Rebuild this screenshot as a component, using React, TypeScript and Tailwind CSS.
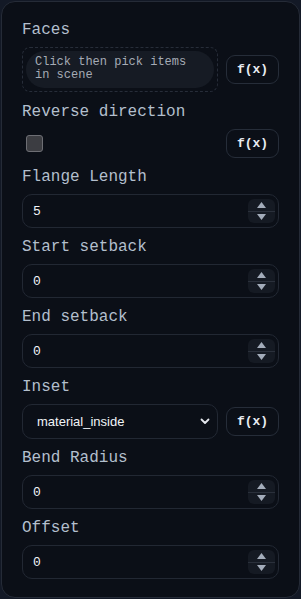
import React from 'react';

const mono = "font-['Liberation_Mono','DejaVu_Sans_Mono',monospace]";

const Label: React.FC<{ text: string }> = ({ text }) => (
  <div className={`${mono} text-[16px] leading-[20px] text-[#b3bfcd] mb-[7px]`}>{text}</div>
);

const FxButton: React.FC = () => (
  <button
    className={`${mono} shrink-0 w-[53px] h-[29px] rounded-[9px] border border-[#262d39] bg-[#0b0f17] text-[13px] font-bold text-[#e8ecf2] flex items-center justify-center`}
  >
    f(x)
  </button>
);

const Spinner: React.FC = () => (
  <div className="absolute right-[3px] top-[4px] bottom-[4px] w-[27px] rounded-[6px] bg-[#151a23] flex flex-col">
    <div className="flex-1 flex items-center justify-center border-b border-[#2a303b]">
      <svg width="9" height="6" viewBox="0 0 9 6">
        <path d="M4.5 0 L9 6 L0 6 Z" fill="#a3acba" />
      </svg>
    </div>
    <div className="flex-1 flex items-center justify-center">
      <svg width="9" height="6" viewBox="0 0 9 6">
        <path d="M0 0 L9 0 L4.5 6 Z" fill="#a3acba" />
      </svg>
    </div>
  </div>
);

const NumberField: React.FC<{ label: string; value: string }> = ({ label, value }) => (
  <div className="mb-[9px]">
    <Label text={label} />
    <div className="relative h-[34px] rounded-[10px] border border-[#222833] bg-[#0b0f17]">
      <input
        readOnly
        value={value}
        className={`${mono} w-full h-full bg-transparent pl-[10px] pr-[36px] text-[13px] text-[#f1f4f8] outline-none`}
      />
      <Spinner />
    </div>
  </div>
);

export default function App() {
  return (
    <div className="w-[301px] h-[599px] bg-[#131926] p-px">
      <div className="h-full rounded-[14px] border border-[#252b37] bg-[#0b0f17] px-[20px] pt-[18px]">
        {/* Faces */}
        <div className="mb-[10px]">
          <Label text="Faces" />
          <div className="flex items-center gap-[8px]">
            <div className="w-[196px] h-[45px] rounded-[8px] border border-dashed border-[#272d39] p-[3px]">
              <div className={`${mono} h-full rounded-full bg-[#161b24] pl-[9px] pt-[5px] text-[12px] leading-[13px] text-[#a5abb5]`}>
                Click then pick items
                <br />
                in scene
              </div>
            </div>
            <FxButton />
          </div>
        </div>

        {/* Reverse direction */}
        <div className="mb-[9px]">
          <Label text="Reverse direction" />
          <div className="flex items-center justify-between h-[29px]">
            <div className="ml-[4px] w-[17px] h-[17px] rounded-[3px] border border-[#6d6e74] bg-[#3c3d42]" />
            <FxButton />
          </div>
        </div>

        <NumberField label="Flange Length" value="5" />
        <NumberField label="Start setback" value="0" />
        <NumberField label="End setback" value="0" />

        {/* Inset */}
        <div className="mb-[9px]">
          <Label text="Inset" />
          <div className="flex items-center gap-[8px]">
            <div className="relative w-[196px] h-[35px] rounded-[10px] border border-[#222833] bg-[#0b0f17] flex items-center pl-[14px]">
              <span className="font-['Liberation_Sans',Arial,sans-serif] text-[13px] text-[#f1f4f8]">material_inside</span>
              <svg className="absolute right-[7px] top-[13px]" width="10" height="7" viewBox="0 0 10 7">
                <path d="M1.5 1.5 L5 5 L8.5 1.5" stroke="#e5e8ee" strokeWidth="1.8" fill="none" strokeLinecap="round" strokeLinejoin="round" />
              </svg>
            </div>
            <FxButton />
          </div>
        </div>

        <NumberField label="Bend Radius" value="0" />
        <NumberField label="Offset" value="0" />
      </div>
    </div>
  );
}
